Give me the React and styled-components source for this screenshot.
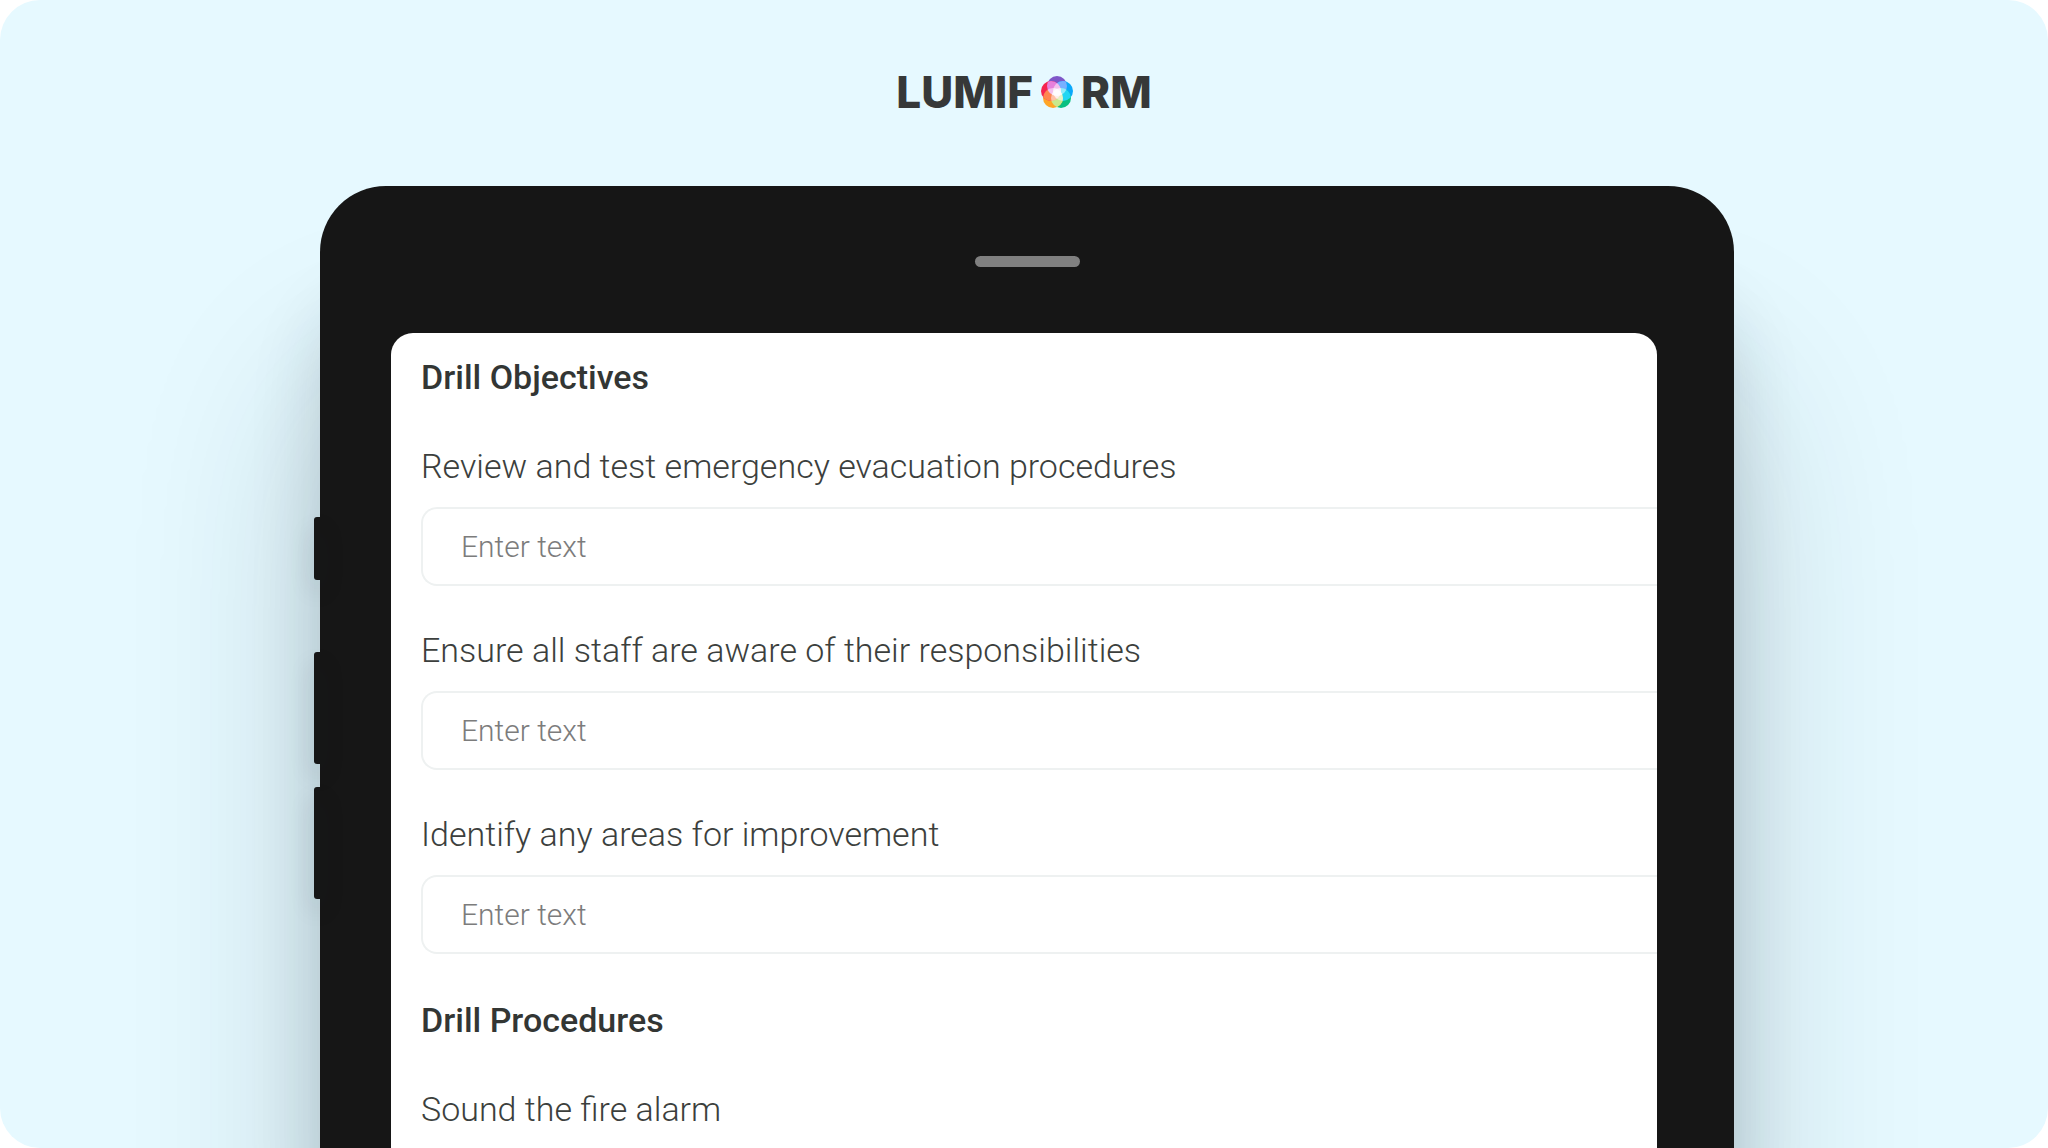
import React, { useId } from "react";
import styled, { createGlobalStyle } from "styled-components";

const sections = [
    {
        title: "Drill Objectives",
        questions: [
            "Review and test emergency evacuation procedures",
            "Ensure all staff are aware of their responsibilities",
            "Identify any areas for improvement",
        ],
    },
    {
        title: "Drill Procedures",
        questions: ["Sound the fire alarm"],
    },
];

// clockwise from the top
const petals = [
    { cx: 16, cy: 10, color: "#7e57c8", overlap: "#78b0ff" },
    { cx: 22, cy: 15, color: "#0aa8fb", overlap: "#22d6f2" },
    { cx: 20, cy: 22, color: "#08c081", overlap: "#c9e88c" },
    { cx: 12, cy: 22, color: "#ffa526", overlap: "#ff8550" },
    { cx: 10, cy: 15, color: "#f5244f", overlap: "#e880dc" },
];

const PetalMark = () => {
    const id = useId();

    return (
        <Mark viewBox="0 0 32 33" aria-hidden="true">
            <defs>
                {petals.map((p, i) => (
                    <clipPath id={`${id}-${i}`} key={i}>
                        <circle cx={p.cx} cy={p.cy} r="10" />
                    </clipPath>
                ))}
            </defs>
            {petals.map((p, i) => (
                <circle key={i} cx={p.cx} cy={p.cy} r="10" fill={p.color} />
            ))}
            {petals.map((p, i) => {
                const next = petals[(i + 1) % petals.length];
                return (
                    <g key={i} clipPath={`url(#${id}-${i})`}>
                        <circle cx={next.cx} cy={next.cy} r="10" fill={p.overlap} />
                    </g>
                );
            })}
            {petals.map((p, i) => {
                const far = petals[(i + 2) % petals.length];
                return (
                    <g key={i} clipPath={`url(#${id}-${i})`}>
                        <circle cx={far.cx} cy={far.cy} r="10" fill="#ffffff" fillOpacity="0.5" />
                    </g>
                );
            })}
        </Mark>
    );
};

const App = () => {
    return (
        <>
            <GlobalStyle />
            <Page>
                <Logo aria-label="Lumiform">
                    <span>LUMIF</span>
                    <PetalMark />
                    <span>RM</span>
                </Logo>
                <Tablet>
                    <Rail>
                        <SideButton $height={63} $gap={72} />
                        <SideButton $height={112} $gap={23} />
                        <SideButton $height={112} $gap={0} />
                    </Rail>
                    <Body>
                        <Bezel>
                            <Speaker />
                        </Bezel>
                        <Screen>
                            {sections.map((section, s) => (
                                <Section key={section.title}>
                                    <Title>{section.title}</Title>
                                    {section.questions.map((question, q) => (
                                        <Field key={question}>
                                            <Label htmlFor={`q-${s}-${q}`}>{question}</Label>
                                            <TextInput id={`q-${s}-${q}`} type="text" placeholder="Enter text" />
                                        </Field>
                                    ))}
                                </Section>
                            ))}
                        </Screen>
                    </Body>
                </Tablet>
            </Page>
        </>
    );
};

const GlobalStyle = createGlobalStyle`
  * {
    box-sizing: border-box;
  }

  body {
    margin: 0;
    background: #ffffff;
    color: #333634;
    font-family: Roboto, "Liberation Sans", sans-serif;
  }
`;

const Page = styled.main`
  display: flex;
  flex-direction: column;
  height: 100vh;
  padding: 66px 314px 0;
  border-radius: 40px;
  background: #e6f9ff;
  overflow: hidden;
`;

const Logo = styled.div`
  display: flex;
  flex: none;
  align-items: center;
  justify-content: center;
  gap: 8px;
  height: 52px;
  margin-bottom: 68px;
  color: #363838;
  font-family: Inter, "Liberation Sans", sans-serif;
  font-size: 44px;
  font-weight: 800;
  line-height: 52px;
`;

const Mark = styled.svg`
  width: 32px;
  height: 33px;
`;

const Tablet = styled.div`
  display: flex;
  flex: 1;
  min-height: 0;
`;

const Rail = styled.div`
  position: relative;
  z-index: 1;
  flex: none;
  width: 6px;
  padding-top: 331px;
`;

const SideButton = styled.div`
  height: ${({ $height }) => $height}px;
  margin-bottom: ${({ $gap }) => $gap}px;
  border-radius: 3px 0 0 3px;
  background: #161616;
  box-shadow: 0 12px 24px rgba(20, 35, 40, 0.2);
`;

const Body = styled.div`
  flex: 1;
  min-width: 0;
  padding: 0 77px 0 71px;
  border-radius: 66px 66px 0 0;
  background: #161616;
  box-shadow: 0 200px 190px rgba(20, 40, 50, 0.2), 0 120px 70px rgba(20, 40, 50, 0.16);
`;

const Bezel = styled.div`
  display: flex;
  align-items: center;
  justify-content: center;
  height: 147px;
  padding-top: 4px;
  padding-left: 7px;
`;

const Speaker = styled.div`
  width: 105px;
  height: 11px;
  border-radius: 6px;
  background: #808080;
`;

const Screen = styled.form`
  height: 100%;
  padding: 24px 0 0 30px;
  border-radius: 22px 22px 0 0;
  background: #ffffff;
  overflow: hidden;
`;

const Section = styled.section`
  margin-bottom: 46px;
`;

const Title = styled.h2`
  margin: 0 0 49px;
  font-size: 34px;
  font-weight: 500;
  line-height: 40px;
`;

const Field = styled.div`
  display: flex;
  flex-direction: column;
  gap: 21px;
  margin-bottom: 44px;
`;

const Label = styled.label`
  color: #3c3f3d;
  font-size: 34px;
  font-weight: 350;
  line-height: 40px;
`;

const TextInput = styled.input`
  width: 100%;
  height: 79px;
  padding: 0 38px;
  border: 2px solid #eef1f1;
  border-right: 0;
  border-radius: 16px 0 0 16px;
  background: #ffffff;
  color: #3c3f3d;
  font-family: inherit;
  font-size: 30px;
  font-weight: 350;
  outline: none;

  &::placeholder {
    color: #7c7c7c;
    opacity: 1;
  }
`;

export default App;
